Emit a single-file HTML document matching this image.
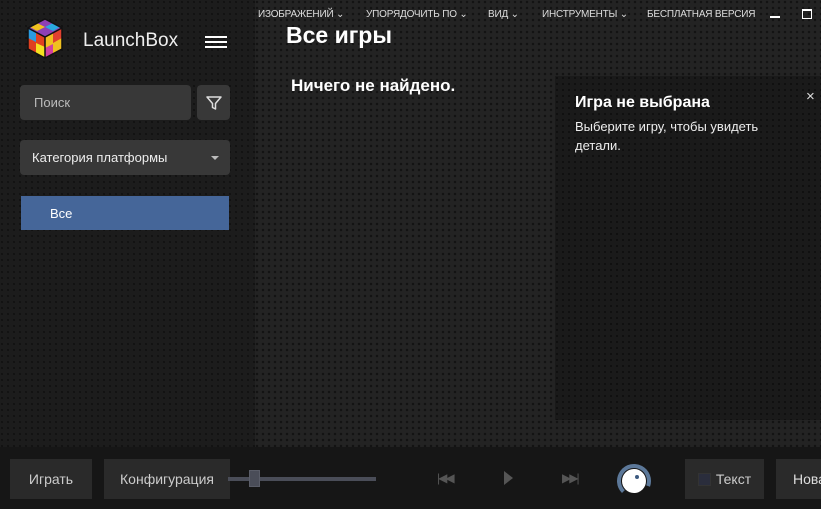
<!DOCTYPE html>
<html><head><meta charset="utf-8"><style>
*{margin:0;padding:0;box-sizing:border-box}
body{width:821px;height:509px;overflow:hidden;position:relative;font-family:"Liberation Sans","DejaVu Sans",sans-serif;color:#fff;background:#1b1b1b}
.side{position:absolute;left:0;top:0;width:255px;height:447px;background-color:#1c1c1c;background-image:radial-gradient(circle at 2px 2px,#121212 1px,transparent 1.3px);background-size:6px 6px}
.main{position:absolute;left:255px;top:0;width:566px;height:447px;background-color:#232323;background-image:radial-gradient(circle at 2px 2px,#131313 1.1px,transparent 1.4px);background-size:6px 6px}
.bottom{position:absolute;left:0;top:447px;width:821px;height:62px;background:#161616}
.abs{position:absolute}
.menu{top:9px;font-size:10px;color:#ddd;letter-spacing:-.2px}
.box{background:#333;border-radius:4px}
.btn{position:absolute;top:459px;height:40px;background:#2a2a2a;color:#ccc;font-size:14px;line-height:40px;text-align:center}
</style></head><body>
<div class="side"></div>
<div class="main"></div>
<div class="abs" style="left:555px;top:76px;width:266px;height:344px;background-color:#1a1a1a;background-image:radial-gradient(circle at 2px 2px,#101010 1px,transparent 1.3px);background-size:6px 6px"></div>
<div class="bottom"></div>

<svg class="abs" style="left:26px;top:18px" width="38" height="42" viewBox="0 0 38 42">
<polygon points="19,1 36,10 19,19 2,10" fill="#8e3fb5"/>
<polygon points="11,5 19,9 11,13 4,9" fill="#f0c020"/>
<polygon points="27,5 34,9 27,13 19,9" fill="#2aa8e0"/>
<polygon points="2,10 19,19 19,40 2,31" fill="#e04020"/>
<polygon points="2,10 10,14 10,24 2,20" fill="#2a9be0"/>
<polygon points="10,25 19,29 19,40 10,35" fill="#f5e020"/>
<polygon points="19,19 36,10 36,31 19,40" fill="#f0c020"/>
<polygon points="27,15 36,10 36,20 27,25" fill="#e04030"/>
<polygon points="19,30 27,26 27,36 19,40" fill="#d040a0"/>
<path d="M19 1 36 10 36 31 19 40 2 31 2 10Z M2 10 19 19 36 10 M19 19V40" fill="none" stroke="#111" stroke-width="1.5"/>
</svg>
<div class="abs" style="left:83px;top:30px;font-size:19px;color:#eee">LaunchBox</div>
<div class="abs" style="left:205px;top:36px;width:22px;height:2px;background:#fff;box-shadow:0 5px #fff,0 10px #fff"></div>

<div class="abs box" style="left:20px;top:85px;width:171px;height:35px;background:#383838"></div>
<div class="abs" style="left:34px;top:95px;font-size:13px;color:#bbb">Поиск</div>
<div class="abs box" style="left:197px;top:85px;width:33px;height:35px;background:#383838"></div>
<svg class="abs" style="left:205px;top:94px" width="18" height="18" viewBox="0 0 18 18"><path d="M2 3H16L10.5 9.5V15L7.5 13.5V9.5Z" fill="none" stroke="#ddd" stroke-width="1.5" stroke-linejoin="round"/></svg>

<div class="abs box" style="left:20px;top:140px;width:210px;height:35px;background:#383838"></div>
<div class="abs" style="left:32px;top:150px;font-size:13px;color:#eee">Категория платформы</div>
<div class="abs" style="left:211px;top:156px;border-left:4px solid transparent;border-right:4px solid transparent;border-top:4px solid #bbb"></div>

<div class="abs" style="left:21px;top:196px;width:208px;height:34px;background:#456699"></div>
<div class="abs" style="left:50px;top:206px;font-size:13px;color:#fff">Все</div>

<div class="abs menu" style="left:258px">ИЗОБРАЖЕНИЙ ⌄</div>
<div class="abs menu" style="left:366px">УПОРЯДОЧИТЬ ПО ⌄</div>
<div class="abs menu" style="left:488px">ВИД ⌄</div>
<div class="abs menu" style="left:542px">ИНСТРУМЕНТЫ ⌄</div>
<div class="abs menu" style="left:647px">БЕСПЛАТНАЯ ВЕРСИЯ</div>
<div class="abs" style="left:770px;top:16px;width:10px;height:2px;background:#fff"></div>
<div class="abs" style="left:802px;top:9px;width:10px;height:10px;border:1.5px solid #fff;border-top-width:2.5px"></div>

<div class="abs" style="left:286px;top:22px;font-size:23px;font-weight:bold">Все игры</div>
<div class="abs" style="left:291px;top:76px;font-size:17px;font-weight:bold">Ничего не найдено.</div>

<div class="abs" style="left:575px;top:94px;font-size:16px;font-weight:bold">Игра не выбрана</div>
<div class="abs" style="left:575px;top:117px;font-size:13px;line-height:19px;color:#eee;width:230px">Выберите игру, чтобы увидеть детали.</div>
<div class="abs" style="left:806px;top:88px;font-size:15px;color:#ddd">×</div>

<div class="btn" style="left:10px;width:82px">Играть</div>
<div class="btn" style="left:104px;width:126px">Конфигурация</div>
<div class="abs" style="left:228px;top:477px;width:148px;height:4px;background:#4a4d58"></div>
<div class="abs" style="left:249px;top:470px;width:11px;height:17px;background:#4a4d58;border:1px solid #5a5d68"></div>
<div class="abs" style="left:437px;top:471px;font-size:12px;color:#555;letter-spacing:-2px">|◀◀</div>
<div class="abs" style="left:504px;top:471px;border-top:7px solid transparent;border-bottom:7px solid transparent;border-left:9px solid #555"></div>
<div class="abs" style="left:562px;top:471px;font-size:12px;color:#555;letter-spacing:-2px">▶▶|</div>
<svg class="abs" style="left:612px;top:459px" width="44" height="44" viewBox="0 0 44 44">
<path d="M11.4 32.6A15 15 0 1 1 36.1 27.1" fill="none" stroke="#5c7899" stroke-width="4"/>
<circle cx="22" cy="22" r="12" fill="#fff"/><circle cx="25" cy="18" r="2" fill="#3c5a80"/></svg>
<div class="btn" style="left:685px;width:79px"><span style="display:inline-block;width:13px;height:13px;background:#2a2d3c;border:1px solid #333;vertical-align:-2px;margin-right:5px"></span>Текст</div>
<div class="btn" style="left:776px;width:60px;text-align:left;padding-left:17px;color:#ddd">Новая</div>
</body></html>
